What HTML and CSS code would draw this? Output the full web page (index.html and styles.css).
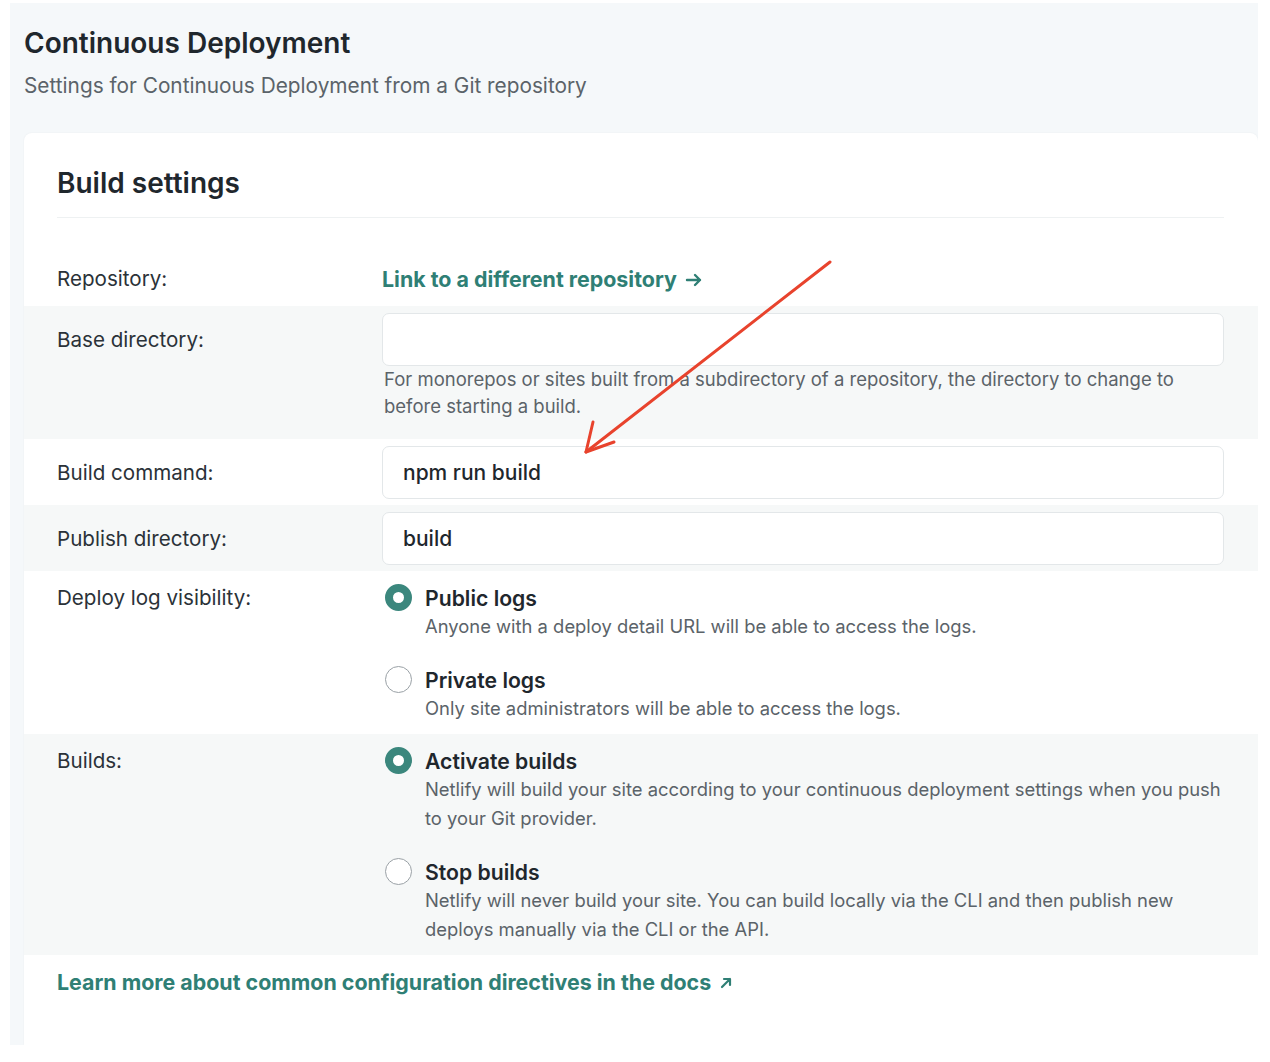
FILE: index.html
```html
<!DOCTYPE html>
<html lang="en">
<head>
<meta charset="utf-8">
<title>Continuous Deployment</title>
<link rel="stylesheet" href="styles.css">
</head>
<body>
<div class="page">
  <header class="page-head">
    <h1 class="page-title">Continuous Deployment</h1>
    <p class="page-sub">Settings for Continuous Deployment from a Git repository</p>
  </header>

  <section class="card">
    <div class="card-head">
      <h2 class="card-title">Build settings</h2>
    </div>

    <div class="rows">
      <div class="row row-first">
        <div class="label">Repository:</div>
        <div class="value">
          <a class="link" href="#">Link to a different repository
            <svg class="ico-right" width="18" height="14" viewBox="0 0 18 14"><path d="M2 7h13M10 2l5 5-5 5" fill="none" stroke="currentColor" stroke-width="2.4" stroke-linecap="round" stroke-linejoin="round"/></svg>
          </a>
        </div>
      </div>

      <div class="row striped row-base">
        <div class="label label-input">Base directory:</div>
        <div class="value">
          <div class="input"></div>
          <p class="help">For monorepos or sites built from a subdirectory of a repository, the directory to change to before starting a build.</p>
        </div>
      </div>

      <div class="row row-input">
        <div class="label label-input">Build command:</div>
        <div class="value"><div class="input">npm run build</div></div>
      </div>

      <div class="row row-input striped">
        <div class="label label-input">Publish directory:</div>
        <div class="value"><div class="input">build</div></div>
      </div>

      <div class="row row-radio">
        <div class="label">Deploy log visibility:</div>
        <div class="value options">
          <div class="option">
            <span class="radio checked"></span>
            <div class="opt-text">
              <div class="opt-title">Public logs</div>
              <div class="opt-desc">Anyone with a deploy detail URL will be able to access the logs.</div>
            </div>
          </div>
          <div class="option">
            <span class="radio"></span>
            <div class="opt-text">
              <div class="opt-title">Private logs</div>
              <div class="opt-desc">Only site administrators will be able to access the logs.</div>
            </div>
          </div>
        </div>
      </div>

      <div class="row row-radio striped">
        <div class="label">Builds:</div>
        <div class="value options">
          <div class="option">
            <span class="radio checked"></span>
            <div class="opt-text">
              <div class="opt-title">Activate builds</div>
              <div class="opt-desc">Netlify will build your site according to your continuous deployment settings when you push to your Git provider.</div>
            </div>
          </div>
          <div class="option">
            <span class="radio"></span>
            <div class="opt-text">
              <div class="opt-title">Stop builds</div>
              <div class="opt-desc">Netlify will never build your site. You can build locally via the CLI and then publish new deploys manually via the CLI or the API.</div>
            </div>
          </div>
        </div>
      </div>
    </div>

    <div class="card-foot">
      <a class="link" href="#">Learn more about common configuration directives in the docs
        <svg class="ico-ext" width="14" height="14" viewBox="0 0 14 14"><path d="M3 11L11 3M5 3h6v6" fill="none" stroke="currentColor" stroke-width="2.2" stroke-linecap="round" stroke-linejoin="round"/></svg>
      </a>
    </div>
  </section>

  <svg class="annotation" width="280" height="210" viewBox="0 0 280 210">
    <path d="M268 7 L24 197" fill="none" stroke="#e8432d" stroke-width="3" stroke-linecap="round"/>
    <path d="M31 167 L24 197 L52 187" fill="none" stroke="#e8432d" stroke-width="3" stroke-linecap="round" stroke-linejoin="round"/>
  </svg>
</div>
</body>
</html>
```

FILE: styles.css
```css
* { box-sizing: border-box; }

html, body {
  margin: 0;
  padding: 0;
  background: #ffffff;
}

body {
  font-family: Inter, "Noto Sans", "Liberation Sans", sans-serif;
  color: #2b3238;
}

.page {
  position: relative;
  margin: 3px 0 0 10px;
  width: 1248px;
  height: 1042px;
  background: #f5f8fa;
  padding: 0 0 0 14px;
  overflow: hidden;
}

.page-head {
  padding-top: 22px;
  height: 130px;
}

.page-title {
  margin: 0;
  font-size: 28px;
  line-height: 36px;
  font-weight: 600;
  color: #1f272d;
}

.page-sub {
  margin: 10px 0 0;
  font-size: 20.8px;
  line-height: 30px;
  color: #5b6369;
}

.card {
  background: #ffffff;
  border-radius: 8px 8px 0 0;
  box-shadow: 0 0 2px rgba(20, 40, 50, 0.06);
  height: 912px;
}

.card-head {
  margin: 0 34px 0 33px;
  padding-top: 32px;
  height: 85px;
  border-bottom: 1px solid #eef1f2;
}

.card-title {
  margin: 0;
  font-size: 28px;
  line-height: 36px;
  font-weight: 600;
  color: #1f272d;
}

.rows {
  margin-top: 33px;
}

.row {
  display: grid;
  grid-template-columns: 325px 842px;
  padding: 0 34px 0 33px;
}

.striped {
  background: #f6f8f8;
}

.row-first {
  padding-top: 14px;
  padding-bottom: 12px;
  height: 55px;
}

.label {
  font-size: 20.6px;
  line-height: 28px;
  color: #2b3238;
}

.label-input {
  line-height: 53px;
}

.row-base {
  padding-top: 7px;
  padding-bottom: 19px;
}

.row-input {
  padding-top: 7px;
  padding-bottom: 6px;
}

.input {
  height: 53px;
  border: 1px solid #e3e7e9;
  border-radius: 7px;
  background: #ffffff;
  padding: 0 20px;
  font-size: 21px;
  line-height: 51px;
  font-weight: 500;
  color: #1f272d;
}

.help {
  margin: 0;
  padding: 0 2px;
  font-size: 18.5px;
  line-height: 27px;
  color: #5b6369;
}

.link {
  display: inline-flex;
  align-items: center;
  gap: 8px;
  font-size: 21.4px;
  line-height: 28px;
  font-weight: 700;
  color: #2f7f75;
  text-decoration: none;
}

.ico-right { margin-top: 1px; }
.ico-ext { margin-top: 1px; }

.row-radio {
  padding-top: 13px;
  padding-bottom: 11px;
}

.options {
  display: flex;
  flex-direction: column;
  gap: 25px;
}

.option {
  display: flex;
  gap: 13px;
}

.radio {
  flex: none;
  width: 27px;
  height: 27px;
  margin: 0 0 0 3px;
  border-radius: 50%;
  border: 1.5px solid #9aa1a6;
  background: #ffffff;
}

.radio.checked {
  border: 8.5px solid #3b877d;
  background: #ffffff;
}

.opt-title {
  font-size: 21.2px;
  line-height: 28px;
  font-weight: 600;
  color: #1f272d;
}

.opt-desc {
  font-size: 18.4px;
  line-height: 29px;
  color: #5b6369;
}

.card-foot {
  padding: 13px 33px 0;
}

.annotation {
  position: absolute;
  left: 552px;
  top: 252px;
  pointer-events: none;
}
```
